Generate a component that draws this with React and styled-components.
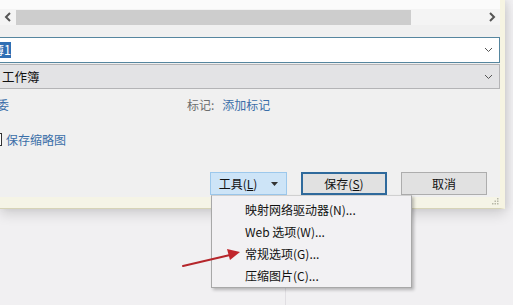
import styled, { createGlobalStyle } from "styled-components";

const GlobalStyle = createGlobalStyle`
  html, body {
    margin: 0;
    padding: 0;
    background: #f1f0f2;
    overflow: hidden;
  }
  body {
    font-family: "Noto Sans CJK SC", "Noto Sans", sans-serif;
    font-size: 12px;
    color: #1a1a1a;
  }
`;

const Stage = styled.div`
  position: relative;
  width: 513px;
  height: 305px;
  overflow: hidden;
`;

const Dialog = styled.div`
  width: 500px;
  height: 208px;
  background: #f0f0f0;
  border-right: 5px solid #f6f4e2;
  border-bottom: 1px solid #d6d3b6;
  box-shadow: 0 5px 12px rgba(0, 0, 0, 0.14), 3px 0 6px rgba(0, 0, 0, 0.06);
  display: flex;
  flex-direction: column;
  position: relative;
`;

const TopPane = styled.div`
  height: 9px;
  background: #fbfbfb;
`;

const ScrollRow = styled.div`
  height: 16px;
  display: flex;
  align-items: center;
  background: #f4f4f4;
`;

const ScrollArrow = styled.div`
  width: 16px;
  height: 16px;
  display: flex;
  align-items: center;
  justify-content: center;
  margin-left: ${(p) => p.$ml || 0}px;
`;

const Thumb = styled.div`
  width: 399px;
  height: 15px;
  background: #cdcdcd;
`;

const Field = styled.div`
  height: ${(p) => p.$h}px;
  margin-top: ${(p) => p.$mt}px;
  box-sizing: border-box;
  display: flex;
  align-items: center;
  background: ${(p) => (p.$gray ? "#e3e3e5" : "#ffffff")};
  border: 1px solid ${(p) => (p.$gray ? "#b4b4b6" : "#56869f")};
  border-left: none;
  padding-right: 6px;
`;

const FieldText = styled.div`
  flex: 1;
  padding-left: 2px;
  font-size: 12.5px;
  line-height: 16px;
  color: #111;
`;

const Selected = styled.span`
  display: inline-flex;
  justify-content: flex-end;
  width: 11px;
  overflow: hidden;
  white-space: nowrap;
  background: #2f6fb4;
  color: #fff;
  margin-left: -2px;
  line-height: 16px;
`;

const InfoRow = styled.div`
  display: flex;
  align-items: center;
  height: 16px;
  margin-top: ${(p) => p.$mt}px;
  white-space: nowrap;
`;

const LinkText = styled.span`
  color: #3a6ea8;
  margin-left: ${(p) => p.$ml || 0}px;
`;

const Label = styled.span`
  color: #6d6d6d;
  margin-left: ${(p) => p.$ml || 0}px;
`;

const Check = styled.span`
  width: 13px;
  height: 13px;
  box-sizing: border-box;
  border: 1px solid #333;
  background: #fff;
  margin-left: -11px;
`;

const ButtonRow = styled.div`
  display: flex;
  justify-content: flex-end;
  gap: 14px;
  margin-top: 25px;
  padding-right: 13px;
`;

const Button = styled.div`
  height: 23px;
  width: ${(p) => p.$w}px;
  box-sizing: border-box;
  display: flex;
  align-items: center;
  justify-content: center;
  gap: 14px;
  background: ${(p) => (p.$tool ? "#cde4f7" : "#e1e1e1")};
  border: ${(p) =>
    p.$default ? "2px solid #2f6a9c" : p.$tool ? "1px solid #9cc8ec" : "1px solid #adadad"};
  font-size: 12px;
  color: #111;
`;

const Key = styled.span`
  text-decoration: underline;
`;

const Footer = styled.div`
  flex: 1;
  margin-top: 2px;
  background: #f5f4e6;
  position: relative;
`;

const Grip = styled.svg`
  position: absolute;
  right: 1px;
  bottom: 3px;
`;

const Menu = styled.div`
  position: absolute;
  left: 211px;
  top: 195px;
  width: 201px;
  height: 93px;
  box-sizing: border-box;
  background: #f2f1f3;
  border: 1px solid #a8a8a8;
  border-top-color: #d0d0d0;
  box-shadow: 2px 2px 3px rgba(0, 0, 0, 0.25);
  padding-top: 2px;
`;

const MenuItem = styled.div`
  height: 22px;
  display: flex;
  align-items: center;
  padding-left: 33px;
  font-size: 12px;
  color: #111;
  white-space: nowrap;
`;

const FaintLine = styled.div`
  position: absolute;
  left: 285px;
  top: 288px;
  width: 1px;
  height: 17px;
  background: #e0dee2;
`;

const Annotation = styled.svg`
  position: absolute;
  left: 180px;
  top: 246px;
`;

function Chevron() {
  return (
    <svg width="9" height="6" viewBox="0 0 9 6">
      <polyline points="1,1 4.5,4.5 8,1" fill="none" stroke="#555" strokeWidth="1" />
    </svg>
  );
}

function ArrowGlyph({ dir }) {
  const pts = dir === "left" ? "6,1 2,5 6,9" : "2,1 6,5 2,9";
  return (
    <svg width="8" height="10" viewBox="0 0 8 10">
      <polyline points={pts} fill="none" stroke="#555" strokeWidth="2" />
    </svg>
  );
}

export default function App() {
  return (
    <Stage>
      <GlobalStyle />
      <Dialog>
        <TopPane />
        <ScrollRow>
          <ScrollArrow>
            <ArrowGlyph dir="left" />
          </ScrollArrow>
          <Thumb />
          <ScrollArrow $ml={73}>
            <ArrowGlyph dir="right" />
          </ScrollArrow>
        </ScrollRow>
        <Field $h={26} $mt={12}>
          <FieldText>
            <Selected>簿1</Selected>
          </FieldText>
          <Chevron />
        </Field>
        <Field $h={25} $mt={1} $gray>
          <FieldText>工作簿</FieldText>
          <Chevron />
        </Field>
        <InfoRow $mt={7}>
          <LinkText $ml={-3}>委</LinkText>
          <Label $ml={178}>标记:</Label>
          <LinkText $ml={8}>添加标记</LinkText>
        </InfoRow>
        <InfoRow $mt={19}>
          <Check />
          <LinkText $ml={4}>保存缩略图</LinkText>
        </InfoRow>
        <ButtonRow>
          <Button $w={77} $tool>
            <span>
              工具(<Key>L</Key>)
            </span>
            <svg width="7" height="4" viewBox="0 0 7 4">
              <polygon points="0,0 7,0 3.5,4" fill="#333" />
            </svg>
          </Button>
          <Button $w={86} $default>
            <span>
              保存(<Key>S</Key>)
            </span>
          </Button>
          <Button $w={86}>取消</Button>
        </ButtonRow>
        <Footer>
          <Grip width="7" height="7" viewBox="0 0 7 7">
            <rect x="5" y="0" width="1.5" height="1.5" fill="#b8b8a8" />
            <rect x="2.5" y="2.5" width="1.5" height="1.5" fill="#b8b8a8" />
            <rect x="5" y="2.5" width="1.5" height="1.5" fill="#b8b8a8" />
            <rect x="0" y="5" width="1.5" height="1.5" fill="#b8b8a8" />
            <rect x="2.5" y="5" width="1.5" height="1.5" fill="#b8b8a8" />
            <rect x="5" y="5" width="1.5" height="1.5" fill="#b8b8a8" />
          </Grip>
        </Footer>
      </Dialog>
      <FaintLine />
      <Menu>
        <MenuItem>映射网络驱动器(N)...</MenuItem>
        <MenuItem>Web 选项(W)...</MenuItem>
        <MenuItem>常规选项(G)...</MenuItem>
        <MenuItem>压缩图片(C)...</MenuItem>
      </Menu>
      <Annotation width="64" height="26" viewBox="0 0 64 26">
        <line x1="3" y1="20" x2="50" y2="9" stroke="#b5262b" strokeWidth="2" strokeLinecap="round" />
        <polygon points="60,6 47,3 50,14" fill="#c0262c" />
      </Annotation>
    </Stage>
  );
}
